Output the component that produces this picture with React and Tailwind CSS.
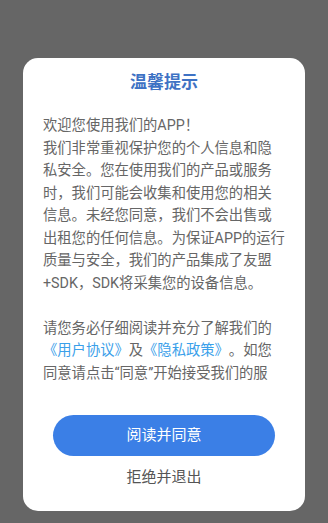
export default function App() {
  return (
    <div
      className="w-[328px] h-[523px] bg-[#666666] pt-[58px] px-[23px] [text-spacing-trim:space-all]"
      style={{ fontFamily: 'Roboto, "Noto Sans CJK SC", sans-serif' }}
    >
      <div className="bg-white rounded-[15px] h-[453px] flex flex-col">
        {/* TITLE */}
        <h1 className="text-center text-[17px] font-bold text-[#3e72c4] leading-[24px] pt-[12px]">
          温馨提示
        </h1>

        {/* CONTENT */}
        <div className="mt-[20px] px-[20px] h-[271px] overflow-hidden text-[14.3px] leading-[22.5px] text-[#666666]">
          <p>欢迎您使用我们的APP！</p>
          <p>
            我们非常重视保护您的个人信息和隐私安全。您在使用我们的产品或服务时，我们可能会收集和使用您的相关信息。未经您同意，我们不会出售或出租您的任何信息。为保证APP的运行质量与安全，我们的产品集成了友盟+SDK，SDK将采集您的设备信息。
          </p>
          <p>&nbsp;</p>
          <p>
            请您务必仔细阅读并充分了解我们的
            <span className="text-[#3aa0ea]">《用户协议》</span>及
            <span className="text-[#3aa0ea]">《隐私政策》</span>
            。如您同意请点击“同意”开始接受我们的服务。
          </p>
        </div>

        {/* ACTIONS */}
        <div className="flex flex-col items-center mt-[30px]">
          <button className="w-[222px] h-[41px] rounded-full bg-[#3b7fe6] text-white text-[15px]">
            阅读并同意
          </button>
          <button className="mt-[11px] text-[15px] leading-[20px] text-[#555555]">
            拒绝并退出
          </button>
        </div>
      </div>
    </div>
  );
}
